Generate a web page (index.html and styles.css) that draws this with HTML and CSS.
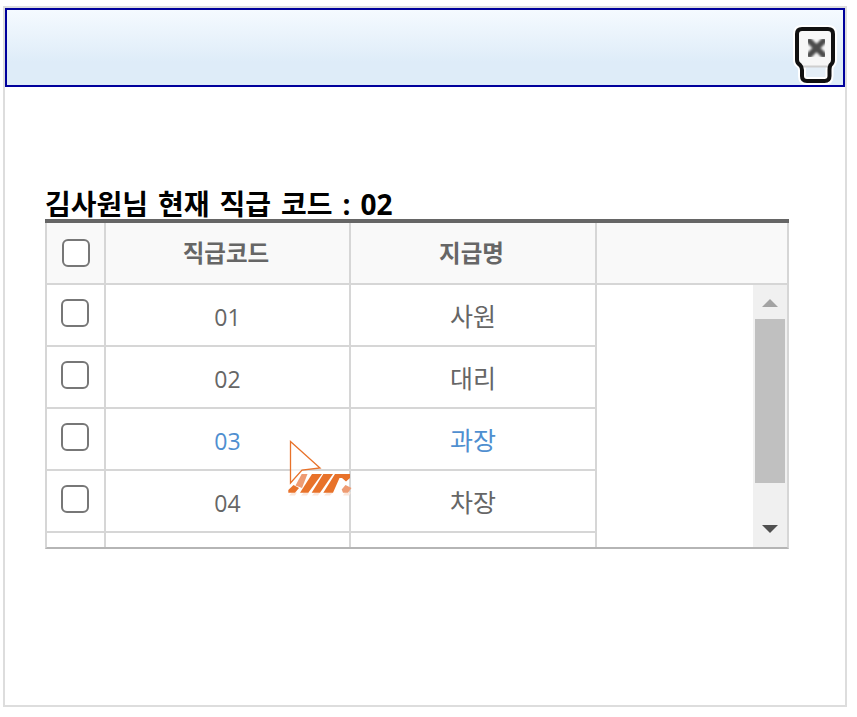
FILE: index.html
```html
<!DOCTYPE html>
<html lang="ko">
<head>
    <meta charset="UTF-8">
    <title>직급 코드</title>
    <link rel="stylesheet" href="styles.css">
</head>
<body>
    <div class="dialog">
        <div class="dialog-head">
            <svg class="close" width="50" height="66" viewBox="0 0 50 66">
                <defs>
                    <filter id="soft"><feGaussianBlur stdDeviation="0.9"/></filter>
                </defs>
                <path d="M7 12 Q7 7 12 7 H38 Q43 7 43 12 V38 Q43 41 40.5 43 Q39.5 45 39.5 48 V54 Q39.5 59 34.5 59 H17 Q12 59 12 54 V48 Q12 45 10 43 Q7 41 7 38 Z" fill="#e4eef7" stroke="#fff" stroke-width="8"/>
                <path d="M7 12 Q7 7 12 7 H38 Q43 7 43 12 V38 Q43 41 40.5 44 H10 Q7 41 7 38 Z" fill="#f7f7f7"/>
                <path d="M10 44.5 H41" stroke="#cfcfcf" stroke-width="2"/>
                <path d="M7 12 Q7 7 12 7 H38 Q43 7 43 12 V38 Q43 41 40.5 43 Q39.5 45 39.5 48 V54 Q39.5 59 34.5 59 H17 Q12 59 12 54 V48 Q12 45 10 43 Q7 41 7 38 Z" fill="none" stroke="#111" stroke-width="4"/>
                <path d="M19.5 19 L33.5 33 M33.5 19 L19.5 33" stroke="#4c4c4c" stroke-width="6" stroke-linecap="round" filter="url(#soft)"/>
            </svg>
        </div>
        <div class="dialog-body">
            <h2 class="title">김사원님 현재 직급 코드 : 02</h2>
            <div class="grid">
                <div class="grid-head">
                    <div class="cell cell-check"><span class="check"></span></div>
                    <div class="cell cell-code">직급코드</div>
                    <div class="cell cell-name">지급명</div>
                    <div class="cell cell-rest"></div>
                </div>
                <div class="grid-body">
                    <div class="rows">
                        <div class="row">
                            <div class="cell cell-check"><span class="check"></span></div>
                            <div class="cell cell-code">01</div>
                            <div class="cell cell-name">사원</div>
                        </div>
                        <div class="row">
                            <div class="cell cell-check"><span class="check"></span></div>
                            <div class="cell cell-code">02</div>
                            <div class="cell cell-name">대리</div>
                        </div>
                        <div class="row row-current">
                            <div class="cell cell-check"><span class="check"></span></div>
                            <div class="cell cell-code">03</div>
                            <div class="cell cell-name">과장</div>
                        </div>
                        <div class="row">
                            <div class="cell cell-check"><span class="check"></span></div>
                            <div class="cell cell-code">04</div>
                            <div class="cell cell-name">차장</div>
                        </div>
                        <div class="row">
                            <div class="cell cell-check"></div>
                            <div class="cell cell-code"></div>
                            <div class="cell cell-name"></div>
                        </div>
                    </div>
                    <div class="scrollbar">
                        <span class="arrow arrow-up"></span>
                        <span class="thumb"></span>
                        <span class="arrow arrow-down"></span>
                    </div>
                </div>
                <svg class="pointer" width="66" height="56" viewBox="0 0 66 56">
                    <path d="M3.5 1.5 L33 28 L15 30 L3.5 43 Z" fill="#fff" fill-opacity="0.6" stroke="#e8722a" stroke-width="1.3"/>
                    <path d="M2 55.5 L5 52.5 H10 L8 55.5 Z M14 55.5 L17 52.5 H22 L20 55.5 Z M25 55.5 L28 52.5 H33 L31 55.5 Z M37 55.5 L40 52.5 H46 L43 55.5 Z M56 55.5 L58 52.5 H64 L62 55.5 Z" fill="#fbe6da"/>
                    <path d="M14.7 34 H20.5 L15 48 L8.5 45.5 Z" fill="#ee9b72"/>
                    <path d="M1.3 50 L6.5 45 L12 48 L8 52.7 H1.3 Z" fill="#e8722a"/>
                    <path d="M13 52.7 L25 34 H35 L21.3 52.7 Z" fill="#e8722a"/>
                    <path d="M24.7 52.7 L36.3 34 H46 L33 52.7 Z" fill="#e8722a"/>
                    <path d="M36.3 52.7 L48 34 H63 V38 L59 41.5 L55 38 H52.5 L46 52.7 Z" fill="#e8722a"/>
                    <path d="M54.7 49.5 L58.5 45 L64.5 48 L61 52.7 H56 Z" fill="#ee9b72"/>
                </svg>
            </div>
        </div>
    </div>
</body>
</html>
```

FILE: styles.css
```css
html, body {
    background: #fff;
}
body {
    margin: 6px 0 0 3px;
    font-family: "Open Sans", "Noto Sans CJK KR", sans-serif;
    color: #666;
}
.dialog {
    box-sizing: border-box;
    width: 844px;
    height: 701px;
    border: 2px solid #ddd;
}
.dialog-head {
    box-sizing: border-box;
    height: 79px;
    border: 2px solid #00009c;
    background: linear-gradient(to bottom, #f5faff, #deecf8 70%);
    position: relative;
}
.close {
    position: absolute;
    right: 3px;
    top: 12px;
    overflow: visible;
}
.dialog-body {
    padding: 100px 56px 0 40px;
}
.title {
    margin: 0;
    height: 32px;
    font-size: 28px;
    line-height: 34px;
    font-weight: 700;
    word-spacing: 2.7px;
    color: #000;
    white-space: nowrap;
}
.grid {
    position: relative;
    width: 744px;
    border-top: 4px solid #666;
}
.grid-head {
    display: flex;
    height: 62px;
    box-sizing: border-box;
    border-left: 2px solid #d6d6d6;
    border-right: 2px solid #d6d6d6;
    border-bottom: 2px solid #d6d6d6;
    background: #f9f9f9;
    font-size: 23.5px;
    font-weight: 700;
}
.grid-head .cell-code,
.grid-head .cell-name {
    padding: 0 3px 2px 0;
}
.cell {
    box-sizing: border-box;
    border-right: 2px solid #d6d6d6;
    display: flex;
    justify-content: center;
    align-items: center;
}
.cell-check {
    width: 59px;
}
.cell-code {
    width: 245px;
}
.cell-name {
    width: 246px;
}
.cell-rest {
    flex: 1;
    border-right: 0;
}
.check {
    box-sizing: border-box;
    width: 28px;
    height: 28px;
    border: 2px solid #777;
    border-radius: 6px;
    background: #fff;
}
.grid-body {
    display: flex;
    justify-content: space-between;
    height: 264px;
    box-sizing: border-box;
    border-left: 2px solid #d6d6d6;
    border-right: 2px solid #d6d6d6;
    border-bottom: 2px solid #b5b5b5;
}
.rows {
    width: 550px;
    overflow: hidden;
}
.row {
    display: flex;
    height: 62px;
    box-sizing: border-box;
    border-bottom: 2px solid #d6d6d6;
    font-size: 23px;
}
.row .cell-code {
    padding-top: 3px;
}
.row .cell-name {
    font-size: 25px;
    padding-bottom: 1px;
}
.row .cell-check {
    padding: 0 1px 4px 0;
}
.row-current {
    color: #4f8fd0;
}
.scrollbar {
    width: 34px;
    background: #f0f0f0;
    display: flex;
    flex-direction: column;
    align-items: center;
}
.thumb {
    width: 30px;
    height: 164px;
    margin-top: 12px;
    background: #c0c0c0;
}
.arrow {
    width: 0;
    height: 0;
    border-left: 8px solid transparent;
    border-right: 8px solid transparent;
}
.arrow-up {
    margin-top: 14px;
    border-bottom: 8px solid #a3a3a3;
}
.arrow-down {
    margin-top: 42px;
    border-top: 8px solid #505050;
}
.pointer {
    position: absolute;
    left: 242px;
    top: 217px;
}
```
